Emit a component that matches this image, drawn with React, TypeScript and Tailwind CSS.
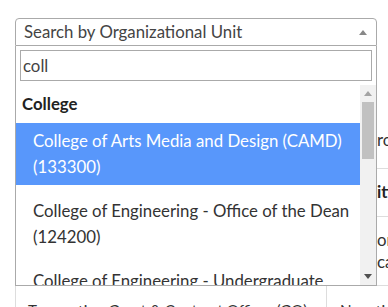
import { useState } from 'react'

interface Option {
  id: string
  name: string
  code: string
}

const OPTIONS: Option[] = [
  { id: '133300', name: 'College of Arts Media and Design (CAMD)', code: '(133300)' },
  { id: '124200', name: 'College of Engineering - Office of the Dean', code: '(124200)' },
  { id: '124300', name: 'College of Engineering - Undergraduate', code: 'Programs (124300)' },
]

function Triangle({ dir, color }: { dir: 'up' | 'down'; color: string }) {
  return (
    <svg width="8" height="5" viewBox="0 0 8 5" className="block">
      {dir === 'up' ? <path d="M0 5 L4 0 L8 5 Z" fill={color} /> : <path d="M0 0 L8 0 L4 5 Z" fill={color} />}
    </svg>
  )
}

export default function App() {
  const [query, setQuery] = useState('coll')
  const [active] = useState('133300')

  return (
    <div
      className="relative w-[388px] h-[307px] overflow-hidden bg-white text-[16.8px] text-[#333]"
      style={{ fontFamily: 'Lato, "Open Sans", sans-serif' }}
    >
      {/* Page behind the dropdown */}
      <div className="pt-[120px] ml-[15px]">
        <div className="flex h-[49px] border-b border-[#ddd]">
          <div className="w-[362px] shrink-0" />
          <div className="pt-[9px] leading-[22px] whitespace-nowrap">rocessing</div>
        </div>
        <div className="flex h-[48px] border-b border-[#ddd]">
          <div className="w-[362px] shrink-0" />
          <div className="pt-[12px] leading-[22px] whitespace-nowrap font-bold text-[#222]">itions</div>
        </div>
        <div className="flex h-[68px]">
          <div className="w-[362px] shrink-0" />
          <div className="pt-[12px] leading-[22px] whitespace-nowrap">
            <div>on</div>
            <div>cation</div>
          </div>
        </div>
        <div className="flex border-t border-l border-[#ddd] text-[15.2px]">
          <div className="w-[311px] shrink-0 overflow-hidden border-r border-[#ddd] pl-[12px] pt-[12px] leading-[24px] whitespace-nowrap">
            Transaction Grant &amp; Contract Officer (GO)
          </div>
          <div className="pl-[13px] pt-[12px] leading-[24px] whitespace-nowrap">Negotiation</div>
        </div>
      </div>

      {/* Select dropdown overlay */}
      <div className="absolute left-[15px] top-[18px] w-[362px] bg-white">
        <div className="flex items-center h-[28px] border border-[#aaa] rounded-t-[4px] pl-[8px] pr-[9px] text-[#444]">
          <span className="flex-1 leading-[26px]">Search by Organizational Unit</span>
          <Triangle dir="up" color="#888" />
        </div>
        <div className="border-x border-b border-[#aaa]">
          <div className="p-[4px]">
            <input
              value={query}
              onChange={(e) => setQuery(e.target.value)}
              className="w-full h-[31px] border border-[#aaa] px-[2px] text-[#444] outline-none"
            />
          </div>
          <div className="flex h-[200px]">
            <div className="flex-1 overflow-hidden">
              <div className="px-[6px] py-[6px] leading-[26px] font-bold text-[#222]">College</div>
              {OPTIONS.map((o) => (
                <div
                  key={o.id}
                  className={`pl-[17px] pr-[6px] py-[5px] mb-[8px] leading-[26px] whitespace-nowrap ${
                    active === o.id ? 'bg-[#5897fb] text-white' : 'text-[#333]'
                  }`}
                >
                  <div>{o.name}</div>
                  <div>{o.code}</div>
                </div>
              ))}
            </div>
            {/* Scrollbar */}
            <div className="w-[16px] shrink-0 bg-[#f1f1f1] flex flex-col items-center">
              <div className="h-[17px] flex items-center justify-center">
                <Triangle dir="up" color="#a3a3a3" />
              </div>
              <div className="w-[12px] h-[57px] bg-[#c1c1c1]" />
              <div className="flex-1" />
              <div className="h-[17px] flex items-center justify-center">
                <Triangle dir="down" color="#505050" />
              </div>
            </div>
          </div>
        </div>
      </div>
    </div>
  )
}
